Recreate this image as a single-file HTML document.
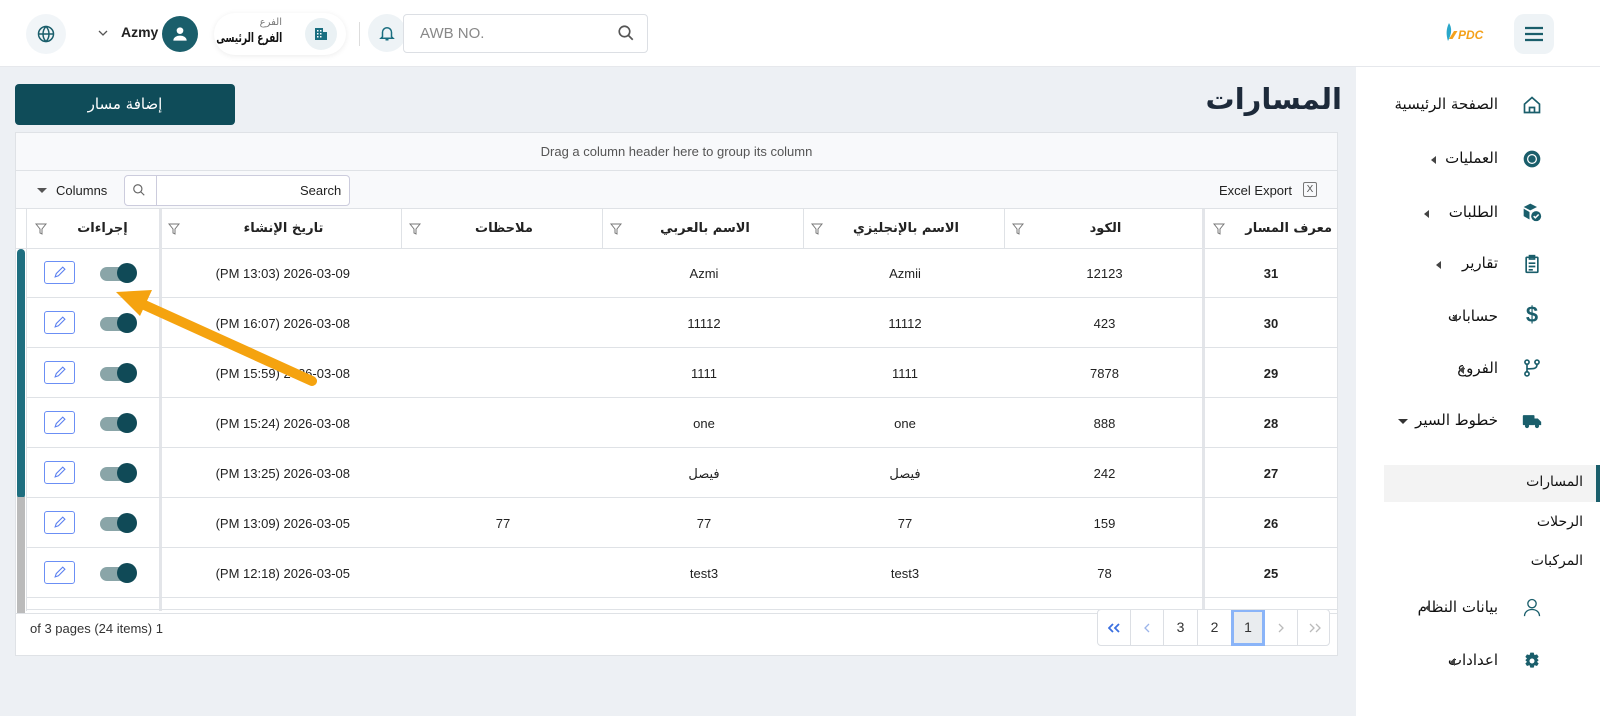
<!DOCTYPE html>
<html><head><meta charset="utf-8">
<style>
*{box-sizing:border-box;margin:0;padding:0}
body{width:1600px;height:716px;overflow:hidden;background:#edf0f4;font-family:"Liberation Sans","DejaVu Sans",sans-serif;position:relative;color:#222}
.abs{position:absolute;white-space:nowrap}
.hdr{left:0;top:0;width:1600px;height:67px;background:#fff;border-bottom:1px solid #e6e8ec}
.side{left:1356px;top:67px;width:244px;height:649px;background:#fff}
.mi{position:absolute;right:102px;font-size:15px;color:#111;white-space:nowrap;font-family:"DejaVu Sans",sans-serif}
.ic{position:absolute;left:1522px;width:20px;height:20px}
.tri{position:absolute;width:0;height:0;border-top:4px solid transparent;border-bottom:4px solid transparent;border-right:5px solid #444}
.grid{left:15px;top:132px;width:1323px;height:524px;background:#fff;border:1px solid #dfe2e6}
.cell{position:absolute;font-size:13px;text-align:center;color:#222}
.th{font-weight:bold;font-size:13px}
.vl{position:absolute;width:1px;background:#dfe2e6}
.fil{position:absolute;width:12px;height:12px}
.ar{font-family:"DejaVu Sans",sans-serif}
</style></head><body>
<div class="abs hdr"></div>
<div class="abs" style="left:26px;top:14px;width:40px;height:40px;border-radius:50%;background:#f1f5f8"></div>
<svg class="abs" style="left:37px;top:25px" width="18" height="18" viewBox="0 0 24 24" fill="none" stroke="#1a5e6b" stroke-width="2"><circle cx="12" cy="12" r="10"/><path d="M2 12h20M12 2c3 3 4 7 4 10s-1 7-4 10c-3-3-4-7-4-10s1-7 4-10z"/></svg>
<svg class="abs" style="left:98px;top:30px" width="10" height="7" viewBox="0 0 10 7" fill="none" stroke="#555" stroke-width="1.3"><path d="M1 1l4 4 4-4"/></svg>
<div class="abs" style="left:121px;top:24px;font-size:14px;font-weight:bold">Azmy</div>
<div class="abs" style="left:162px;top:16px;width:36px;height:36px;border-radius:50%;background:#1a5e6b"></div>
<svg class="abs" style="left:170px;top:24px" width="20" height="20" viewBox="0 0 24 24" fill="#fff"><circle cx="12" cy="8" r="4"/><path d="M4 20c0-4 4-6 8-6s8 2 8 6z"/></svg>
<div class="abs" style="left:214px;top:13px;width:132px;height:42px;border-radius:21px;background:#fff;box-shadow:0 1px 6px rgba(0,0,0,.08)"></div>
<div class="abs ar" style="right:1318px;top:17px;font-size:10px;color:#777">الفرع</div>
<div class="abs ar" style="right:1318px;top:31px;font-size:13px;font-weight:bold;color:#111;transform:scaleX(0.7);transform-origin:right center">الفرع الرئيسى</div>
<div class="abs" style="left:305px;top:18px;width:32px;height:32px;border-radius:50%;background:#eaf1f4"></div>
<svg class="abs" style="left:313px;top:26px" width="16" height="16" viewBox="0 0 16 16" fill="#1a6e80"><rect x="2" y="2" width="8" height="12"/><rect x="10" y="6" width="4" height="8"/><g fill="#fff"><rect x="4" y="4" width="1.5" height="1.5"/><rect x="7" y="4" width="1.5" height="1.5"/><rect x="4" y="7" width="1.5" height="1.5"/><rect x="7" y="7" width="1.5" height="1.5"/><rect x="4" y="10" width="1.5" height="1.5"/><rect x="7" y="10" width="1.5" height="1.5"/></g></svg>
<div class="abs" style="left:359px;top:22px;width:1px;height:24px;background:#ddd"></div>
<div class="abs" style="left:368px;top:14px;width:38px;height:38px;border-radius:50%;background:#eef3f6"></div>
<svg class="abs" style="left:378px;top:23px" width="18" height="20" viewBox="0 0 24 24" fill="none" stroke="#1a6e80" stroke-width="2"><path d="M6 17V11a6 6 0 0 1 12 0v6l2 2H4z"/><path d="M10 21h4"/></svg>
<div class="abs" style="left:403px;top:14px;width:245px;height:39px;border:1px solid #dcdfe4;border-radius:4px;background:#fff"></div>
<div class="abs" style="left:420px;top:25px;font-size:15px;color:#888">AWB NO.</div>
<svg class="abs" style="left:617px;top:24px" width="18" height="18" viewBox="0 0 24 24" fill="none" stroke="#555" stroke-width="2.2"><circle cx="10" cy="10" r="7"/><path d="M15 15l6 6"/></svg>
<svg class="abs" style="left:1440px;top:20px" width="60" height="26" viewBox="0 0 60 26"><path d="M9 3c3 5 3 10 -1 18c-2-6-2-12 1-18z" fill="#2aa7c9"/><path d="M9 19l5-8h3.5l-5 8z" fill="#f4a11b"/><text x="18" y="19" font-family="Liberation Sans" font-weight="bold" font-style="italic" font-size="12" fill="#f4a11b">PDC</text></svg>
<div class="abs" style="left:1514px;top:14px;width:40px;height:40px;border-radius:10px;background:#eef3f6"></div>
<svg class="abs" style="left:1524px;top:25px" width="20" height="18" viewBox="0 0 20 18" stroke="#1a5e6b" stroke-width="2.2"><path d="M1 3h18M1 9h18M1 15h18"/></svg>

<div class="abs side"></div>
<div class="mi" style="top:95px">الصفحة الرئيسية</div>
<svg class="ic" style="top:95px" viewBox="0 0 24 24" fill="none" stroke="#1a5e6b" stroke-width="2"><path d="M3 11l9-8 9 8v10H3z"/><path d="M9 21v-6h6v6"/></svg>
<div class="mi" style="top:149px">العمليات</div><div class="tri" style="left:1431px;top:156px"></div>
<svg class="ic" style="top:149px" viewBox="0 0 24 24"><circle cx="12" cy="12" r="10" fill="#1a5e6b"/><circle cx="12" cy="12" r="6" fill="#fff"/><circle cx="12" cy="12" r="4.5" fill="#1a5e6b"/></svg>
<div class="mi" style="top:203px">الطلبات</div><div class="tri" style="left:1424px;top:210px"></div>
<svg class="ic" style="top:202px" viewBox="0 0 24 24"><path d="M2 6l8-4 8 4-8 4z" fill="#1a5e6b"/><path d="M2 8l7 4v9l-7-4z" fill="#1a5e6b"/><circle cx="17" cy="17" r="6" fill="#1a5e6b"/><path d="M14 17l2 2 4-4" stroke="#fff" stroke-width="1.8" fill="none"/></svg>
<div class="mi" style="top:254px">تقارير</div><div class="tri" style="left:1436px;top:261px"></div>
<svg class="ic" style="top:254px" viewBox="0 0 24 24" fill="none" stroke="#1a5e6b" stroke-width="2"><rect x="5" y="4" width="14" height="18" rx="1"/><rect x="9" y="2" width="6" height="4"/><path d="M8 11h8M8 15h8M8 19h5"/></svg>
<div class="mi" style="top:307px">حسابات</div><div class="tri" style="left:1452px;top:314px"></div>
<div class="ic" style="top:303px;font-size:22px;font-weight:bold;color:#1a5e6b;text-align:center;line-height:24px">$</div>
<div class="mi" style="top:359px">الفروع</div><div class="tri" style="left:1459px;top:366px"></div>
<svg class="ic" style="top:358px" viewBox="0 0 24 24" fill="none" stroke="#1a5e6b" stroke-width="2"><circle cx="6" cy="5" r="2.5"/><circle cx="18" cy="5" r="2.5"/><circle cx="6" cy="19" r="2.5"/><path d="M6 8v8M18 8c0 5-4 5-12 5"/></svg>
<div class="mi" style="top:411px">خطوط السير</div>
<div class="abs" style="left:1398px;top:419px;border-left:5px solid transparent;border-right:5px solid transparent;border-top:5px solid #333"></div>
<svg class="ic" style="top:411px" viewBox="0 0 24 24" fill="#1a5e6b"><rect x="1" y="5" width="14" height="12" rx="1"/><path d="M15 9h4l4 4v4h-8z"/><circle cx="6" cy="18" r="2.5"/><circle cx="18" cy="18" r="2.5"/></svg>
<div class="abs" style="left:1384px;top:465px;width:212px;height:37px;background:#f3f3f3"></div>
<div class="abs" style="left:1596px;top:465px;width:4px;height:37px;background:#1a5e6b"></div>
<div class="mi" style="top:474px;right:17px;font-size:14px">المسارات</div>
<div class="mi" style="top:514px;right:17px;font-size:14px">الرحلات</div>
<div class="mi" style="top:553px;right:17px;font-size:14px">المركبات</div>
<div class="mi" style="top:598px">بيانات النظام</div><div class="tri" style="left:1425px;top:604px"></div>
<svg class="ic" style="top:597px" viewBox="0 0 24 24" fill="none" stroke="#1a5e6b" stroke-width="1.6"><circle cx="12" cy="8" r="5"/><path d="M3 23c0-5 4-8 9-8s9 3 9 8"/></svg>
<div class="mi" style="top:651px">اعدادات</div><div class="tri" style="left:1450px;top:658px"></div>
<svg class="ic" style="top:651px" viewBox="0 0 24 24" fill="#1a5e6b"><path d="M10 2h4l1 3 3-1 2 3-2 2 2 2-2 2 2 2-2 3-3-1-1 3h-4l-1-3-3 1-2-3 2-2-2-2 2-2-2-2 2-3 3 1z"/><circle cx="12" cy="12" r="3" fill="#fff"/></svg>

<div class="abs ar" style="right:258px;top:82px;font-size:29px;font-weight:bold;color:#1d2a3a">المسارات</div>
<div class="abs ar" style="left:15px;top:84px;width:220px;height:41px;border-radius:4px;background:#0f4c59;color:#fff;font-size:15px;text-align:center;line-height:41px">إضافة مسار</div>

<div class="abs grid">
 <div class="abs" style="left:0;top:0;width:1321px;height:38px;background:#f8f9fb;border-bottom:1px solid #dfe2e6;text-align:center;font-size:13px;color:#555;line-height:38px">Drag a column header here to group its column</div>
 <div class="abs" style="left:0;top:38px;width:1321px;height:38px;background:#f8f9fb;border-bottom:1px solid #dfe2e6"></div>
 <div class="abs" style="left:21px;top:55px;border-left:5px solid transparent;border-right:5px solid transparent;border-top:5px solid #555"></div>
 <div class="abs" style="left:40px;top:50px;font-size:13px;color:#222">Columns</div>
 <div class="abs" style="left:108px;top:42px;width:226px;height:31px;border:1px solid #ccd;border-radius:4px;background:#fff"></div>
 <div class="abs" style="left:140px;top:43px;width:1px;height:29px;background:#ccd"></div>
 <svg class="abs" style="left:116px;top:50px" width="14" height="14" viewBox="0 0 24 24" fill="none" stroke="#666" stroke-width="2"><circle cx="10" cy="10" r="7"/><path d="M15 15l6 6"/></svg>
 <div class="abs" style="left:284px;top:50px;font-size:13px">Search</div>
 <div class="abs" style="left:1203px;top:50px;font-size:13px">Excel Export</div>
 <div class="abs" style="left:1287px;top:49px;width:14px;height:15px;border:1px solid #777;border-radius:2px;font-size:10px;text-align:center;line-height:13px;color:#555">X</div>
 <div class="abs" style="left:0;top:76px;width:1321px;height:40px;border-bottom:1px solid #dfe2e6"></div>
 <div class="vl" style="left:10px;top:76px;height:402px"></div>
 <div class="vl" style="left:143px;top:76px;height:402px;width:3px;background:#e3e5e9"></div>
 <div class="vl" style="left:385px;top:76px;height:40px"></div>
 <div class="vl" style="left:586px;top:76px;height:40px"></div>
 <div class="vl" style="left:787px;top:76px;height:40px"></div>
 <div class="vl" style="left:988px;top:76px;height:40px"></div>
 <div class="vl" style="left:1186px;top:76px;height:402px;width:3px;background:#e3e5e9"></div>
 <div class="cell th ar" style="left:30px;top:88px;width:113px">إجراءات</div>
 <div class="cell th ar" style="left:150px;top:88px;width:235px">تاريخ الإنشاء</div>
 <div class="cell th ar" style="left:390px;top:88px;width:196px">ملاحظات</div>
 <div class="cell th ar" style="left:591px;top:88px;width:196px">الاسم بالعربي</div>
 <div class="cell th ar" style="left:792px;top:88px;width:196px">الاسم بالإنجليزي</div>
 <div class="cell th ar" style="left:993px;top:88px;width:193px">الكود</div>
 <div class="cell th ar" style="left:1210px;top:88px;width:106px;text-align:right">معرف المسار</div>
 <svg class="fil" style="left:19px;top:90px" viewBox="0 0 12 12" fill="none" stroke="#777"><path d="M1 1h10L7 6v5L5 10V6z"/></svg>
 <svg class="fil" style="left:152px;top:90px" viewBox="0 0 12 12" fill="none" stroke="#777"><path d="M1 1h10L7 6v5L5 10V6z"/></svg>
 <svg class="fil" style="left:393px;top:90px" viewBox="0 0 12 12" fill="none" stroke="#777"><path d="M1 1h10L7 6v5L5 10V6z"/></svg>
 <svg class="fil" style="left:594px;top:90px" viewBox="0 0 12 12" fill="none" stroke="#777"><path d="M1 1h10L7 6v5L5 10V6z"/></svg>
 <svg class="fil" style="left:795px;top:90px" viewBox="0 0 12 12" fill="none" stroke="#777"><path d="M1 1h10L7 6v5L5 10V6z"/></svg>
 <svg class="fil" style="left:996px;top:90px" viewBox="0 0 12 12" fill="none" stroke="#777"><path d="M1 1h10L7 6v5L5 10V6z"/></svg>
 <svg class="fil" style="left:1197px;top:90px" viewBox="0 0 12 12" fill="none" stroke="#777"><path d="M1 1h10L7 6v5L5 10V6z"/></svg>
 <div class="abs" style="left:1px;top:116px;width:8px;height:250px;background:#1f6f80;border-radius:4px"></div>
 <div class="abs" style="left:1px;top:364px;width:8px;height:116px;background:#bbb"></div>
 <div class="abs" style="left:0;top:480px;width:1321px;height:1px;background:#dfe2e6"></div>
</div>
<div class="abs" style="left:30px;top:621px;font-size:13px;color:#333">of 3 pages (24 items) 1</div>
<div class="abs" style="left:1097px;top:609px;width:233px;height:37px;border:1px solid #dcdfe4;border-radius:4px;background:#fff"></div>
<div class="abs" style="left:1097px;top:609px;height:37px;display:flex;font-size:14px;direction:ltr">
 <div style="width:34px;height:37px;border-right:1px solid #dcdfe4;display:flex;align-items:center;justify-content:center"><svg width="12" height="10" viewBox="0 0 12 10" fill="none" stroke="#3a6fe0" stroke-width="1.8"><path d="M5 1L1 5l4 4M11 1L7 5l4 4"/></svg></div>
 <div style="width:33px;height:37px;border-right:1px solid #dcdfe4;display:flex;align-items:center;justify-content:center"><svg width="6" height="10" viewBox="0 0 6 10" fill="none" stroke="#9bb4ea" stroke-width="1.3"><path d="M5 1L1 5l4 4"/></svg></div>
 <div style="width:34px;text-align:center;line-height:37px;color:#333;border-right:1px solid #dcdfe4">3</div>
 <div style="width:33px;text-align:center;line-height:37px;color:#333">2</div>
 <div style="width:34px;height:37px;text-align:center;line-height:31px;color:#333;background:#e9ecef;border:3px solid #8ab4f8">1</div>
 <div style="width:33px;height:37px;border-right:1px solid #dcdfe4;display:flex;align-items:center;justify-content:center"><svg width="6" height="10" viewBox="0 0 6 10" fill="none" stroke="#bbb" stroke-width="1.3"><path d="M1 1l4 4-4 4"/></svg></div>
 <div style="width:33px;height:37px;display:flex;align-items:center;justify-content:center"><svg width="12" height="10" viewBox="0 0 12 10" fill="none" stroke="#bbb" stroke-width="1.3"><path d="M1 1l4 4-4 4M7 1l4 4-4 4"/></svg></div>
</div>

<div id="body"></div>
<script>
var d=[["31","12123","Azmii","Azmi","","(PM 13:03) 2026-03-09"],["30","423","11112","11112","","(PM 16:07) 2026-03-08"],["29","7878","1111","1111","","(PM 15:59) 2026-03-08"],["28","888","one","one","","(PM 15:24) 2026-03-08"],["27","242","فيصل","فيصل","","(PM 13:25) 2026-03-08"],["26","159","77","77","77","(PM 13:09) 2026-03-05"],["25","78","test3","test3","","(PM 12:18) 2026-03-05"]];
var h="";
for(var i=0;i<d.length;i++){var y=248+i*50,r=d[i];
h+='<div class="abs" style="left:26px;top:'+(y+49)+'px;width:1311px;height:1px;background:#dfe2e6"></div>';
h+='<div class="abs" style="left:1218px;top:'+(y+18)+'px;width:106px;text-align:center;font-size:13px;font-weight:bold">'+r[0]+'</div>';
var xs=[[1008,193,1],[807,196,2],[606,196,3],[405,196,4]];
for(var j=0;j<4;j++)h+='<div class="abs" style="left:'+xs[j][0]+'px;top:'+(y+18)+'px;width:'+xs[j][1]+'px;text-align:center;font-size:13px">'+r[xs[j][2]]+'</div>';
h+='<div class="abs" style="left:165px;top:'+(y+18)+'px;width:185px;text-align:right;font-size:13px">'+r[5]+'</div>';
h+='<div class="abs" style="left:44px;top:'+(y+13)+'px;width:31px;height:23px;border:1px solid #6b8ff5;border-radius:3px"></div>';
h+='<svg class="abs" style="left:53px;top:'+(y+18)+'px" width="13" height="13" viewBox="0 0 12 12" fill="none" stroke="#5b80f0"><path d="M2 10l1-3 6-6 2 2-6 6z"/></svg>';
h+='<div class="abs" style="left:100px;top:'+(y+19)+'px;width:34px;height:14px;border-radius:7px;background:#8aa5a8"></div>';
h+='<div class="abs" style="left:117px;top:'+(y+15)+'px;width:20px;height:20px;border-radius:50%;background:#104a57"></div>';}
h+='<div class="abs" style="left:26px;top:609px;width:1311px;height:1px;background:#dfe2e6"></div>';
document.getElementById("body").innerHTML=h;
</script>
<svg class="abs" style="left:0;top:0" width="400" height="400">
 <line x1="312" y1="381" x2="140" y2="303" stroke="#f5a30f" stroke-width="10" stroke-linecap="round"/>
 <polygon points="116,292 152,290 140,316" fill="#f5a30f"/>
</svg>
</body></html>
